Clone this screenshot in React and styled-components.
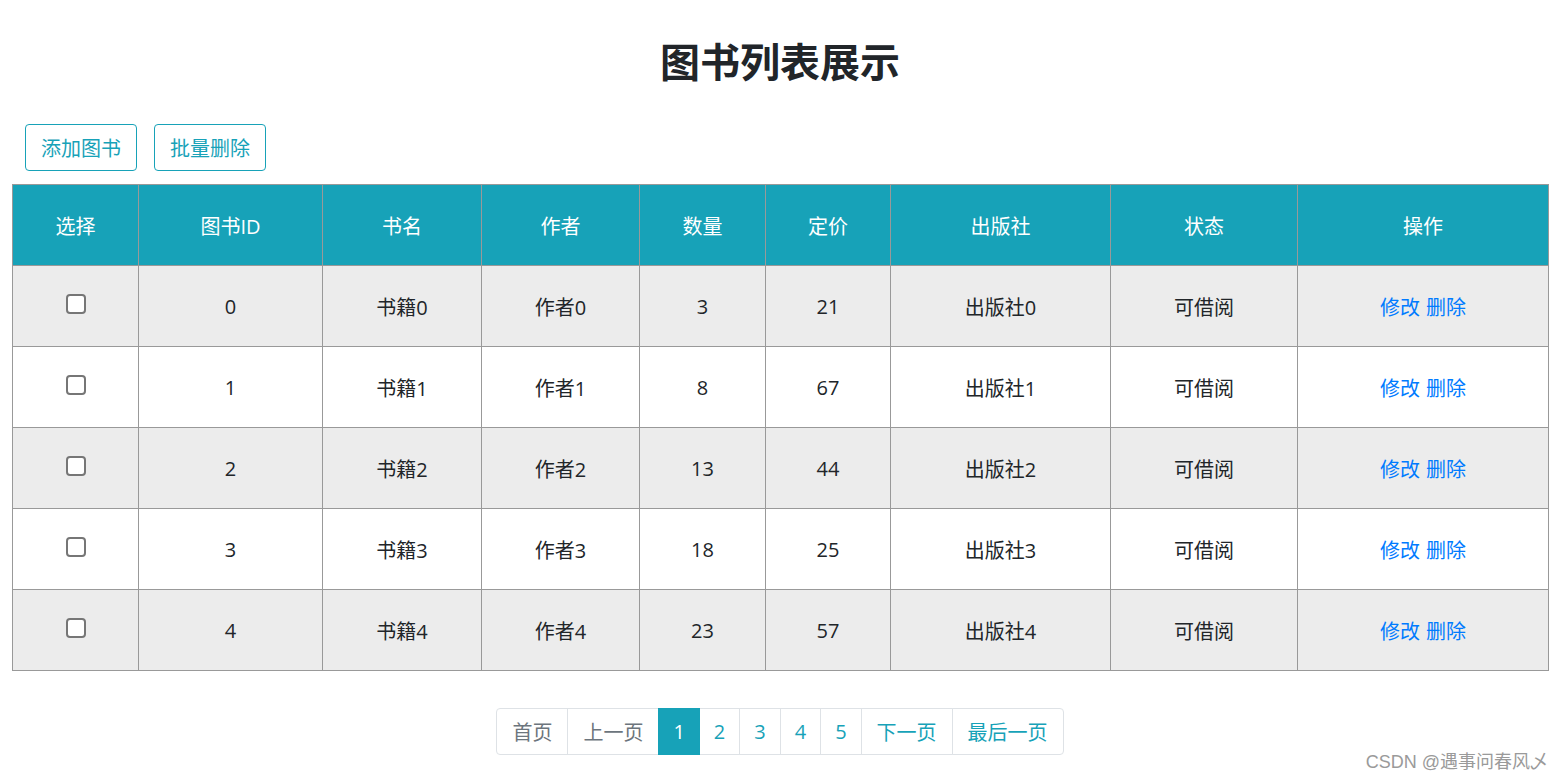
import React from "react";
import styled, { createGlobalStyle } from "styled-components";

const Global = createGlobalStyle`
  html, body { margin: 0; padding: 0; background: #fff; }
  body {
    font-family: "Open Sans", "Noto Sans CJK SC", sans-serif;
    color: #212529;
    width: 1563px;
    height: 780px;
    overflow: hidden;
    position: relative;
  }
`;

const Page = styled.div`
  padding: 0 15px 0 12px;
  display: flex;
  flex-direction: column;
`;

const Title = styled.h1`
  margin: 38px 0 38px;
  text-align: center;
  font-size: 40px;
  line-height: 48px;
  font-weight: 700;
  color: #212529;
`;

const Toolbar = styled.div`
  display: flex;
  gap: 17px;
  margin-left: 13px;
  margin-bottom: 13px;
`;

const OutlineButton = styled.button`
  height: 47px;
  padding: 2px 15px 0;
  border: 1px solid #17a2b8;
  border-radius: 4px;
  background: #fff;
  color: #17a2b8;
  font-family: inherit;
  font-size: 20px;
  line-height: 1;
  cursor: pointer;
`;

const Table = styled.table`
  width: 1536px;
  border-collapse: collapse;
  table-layout: fixed;
  font-size: 20px;
`;

const HeadCell = styled.th`
  height: 80px;
  padding: 0;
  background: #17a2b8;
  color: #fff;
  font-weight: 400;
  border: 1px solid #999;
  text-align: center;
  vertical-align: middle;
`;

const Row = styled.tr`
  background: ${(p) => (p.$striped ? "#ececec" : "#fff")};
`;

const Cell = styled.td`
  height: 80px;
  padding: 0;
  border: 1px solid #999;
  text-align: center;
  vertical-align: middle;
  color: #212529;
`;

const Check = styled.input`
  appearance: none;
  width: 20px;
  height: 20px;
  margin: 0 0 7px;
  border: 2px solid #767676;
  border-radius: 4px;
  background: #fff;
  vertical-align: middle;
`;

const Link = styled.a`
  color: #007bff;
  text-decoration: none;
  margin: 0 3px;
  cursor: pointer;
`;

const Pager = styled.ul`
  list-style: none;
  display: flex;
  align-self: center;
  margin: 37px 0 0;
  padding: 0;
`;

const PageItem = styled.li`
  height: 45px;
  padding: 0 ${(p) => (p.$narrow ? 14 : 15)}px;
  display: flex;
  align-items: center;
  font-size: 20px;
  border: 1px solid #dee2e6;
  margin-left: -1px;
  color: ${(p) => (p.$active ? "#fff" : p.$disabled ? "#6c757d" : "#17a2b8")};
  background: ${(p) => (p.$active ? "#17a2b8" : "#fff")};
  border-color: ${(p) => (p.$active ? "#17a2b8" : "#dee2e6")};
  position: relative;
  z-index: ${(p) => (p.$active ? 1 : 0)};
  &:first-child {
    margin-left: 0;
    border-radius: 4px 0 0 4px;
  }
  &:last-child {
    border-radius: 0 4px 4px 0;
  }
`;

const Watermark = styled.div`
  position: absolute;
  right: 15px;
  bottom: 7px;
  font-family: "Liberation Sans", "Noto Sans CJK SC", sans-serif;
  font-size: 18px;
  color: #9a9a9a;
`;

const widths = [126, 184, 159, 158, 126, 125, 220, 187, 251];
const headers = ["选择", "图书ID", "书名", "作者", "数量", "定价", "出版社", "状态", "操作"];
const books = [
  { id: 0, count: 3, price: 21 },
  { id: 1, count: 8, price: 67 },
  { id: 2, count: 13, price: 44 },
  { id: 3, count: 18, price: 25 },
  { id: 4, count: 23, price: 57 },
];
const pages = [
  { label: "首页", disabled: true },
  { label: "上一页", disabled: true },
  { label: "1", active: true, narrow: true },
  { label: "2", narrow: true },
  { label: "3", narrow: true },
  { label: "4", narrow: true },
  { label: "5", narrow: true },
  { label: "下一页" },
  { label: "最后一页" },
];

export default function App() {
  return (
    <>
      <Global />
      <Page>
        <Title>图书列表展示</Title>
        <Toolbar>
          <OutlineButton>添加图书</OutlineButton>
          <OutlineButton>批量删除</OutlineButton>
        </Toolbar>
        <Table>
          <colgroup>
            {widths.map((w, i) => (
              <col key={i} style={{ width: w }} />
            ))}
          </colgroup>
          <thead>
            <tr>
              {headers.map((h) => (
                <HeadCell key={h}>{h}</HeadCell>
              ))}
            </tr>
          </thead>
          <tbody>
            {books.map((b, i) => (
              <Row key={b.id} $striped={i % 2 === 0}>
                <Cell>
                  <Check type="checkbox" />
                </Cell>
                <Cell>{b.id}</Cell>
                <Cell>书籍{b.id}</Cell>
                <Cell>作者{b.id}</Cell>
                <Cell>{b.count}</Cell>
                <Cell>{b.price}</Cell>
                <Cell>出版社{b.id}</Cell>
                <Cell>可借阅</Cell>
                <Cell>
                  <Link>修改</Link>
                  <Link>删除</Link>
                </Cell>
              </Row>
            ))}
          </tbody>
        </Table>
        <Pager>
          {pages.map((p) => (
            <PageItem
              key={p.label}
              $active={p.active}
              $disabled={p.disabled}
              $narrow={p.narrow}
            >
              {p.label}
            </PageItem>
          ))}
        </Pager>
      </Page>
      <Watermark>CSDN @遇事问春风乄</Watermark>
    </>
  );
}
